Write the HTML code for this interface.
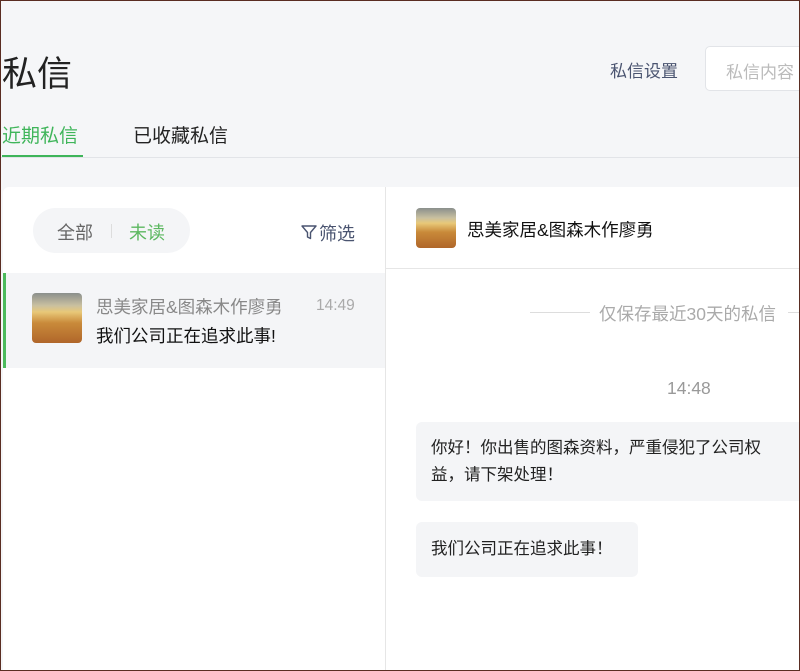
<!DOCTYPE html>
<html><head><meta charset="utf-8"><style>
*{margin:0;padding:0;box-sizing:border-box}
body{width:800px;height:671px;overflow:hidden;background:#f5f6f8;font-family:"Liberation Sans","Noto Sans CJK SC",sans-serif;position:relative;}
.a{position:absolute}
.av{background:linear-gradient(180deg,#8a8f8c 0%,#c9c0a0 25%,#e8c878 38%,#c98a3a 60%,#b0662a 100%);border-radius:4px}
</style></head><body>
<div class="a" style="left:2px;top:46px;font-size:35px;color:#222">私信</div>
<div class="a" style="left:610px;top:57px;font-size:17px;color:#4a5470">私信设置</div>
<div class="a" style="left:705px;top:46px;width:100px;height:45px;background:#fff;border:1px solid #e2e4e8;border-radius:5px;font-size:17px;color:#bbb;padding:11px 0 0 20px;white-space:nowrap;overflow:hidden">私信内容</div>
<div class="a" style="left:2px;top:121px;font-size:19px;color:#3fb55a">近期私信</div>
<div class="a" style="left:2px;top:155px;width:81px;height:2px;background:#3fb55a"></div>
<div class="a" style="left:133px;top:121px;font-size:19px;color:#222">已收藏私信</div>
<div class="a" style="left:0;top:157px;width:800px;height:1px;background:#e2e4e8"></div>
<div class="a" style="left:3px;top:187px;width:382px;height:484px;background:#fff;border-top-left-radius:6px"></div>
<div class="a" style="left:385px;top:187px;width:1px;height:484px;background:#e6e6e6"></div>
<div class="a" style="left:386px;top:187px;width:414px;height:484px;background:#fff"></div>
<div class="a" style="left:33px;top:208px;width:157px;height:45px;background:#f4f5f7;border-radius:23px"></div>
<div class="a" style="left:57px;top:219px;font-size:18px;color:#666">全部</div>
<div class="a" style="left:111px;top:224px;width:1px;height:14px;background:#ddd"></div>
<div class="a" style="left:129px;top:219px;font-size:18px;color:#5cb860">未读</div>
<svg class="a" style="left:300px;top:223px" width="18" height="18" viewBox="0 0 18 18"><path d="M2 3h14l-5.5 6.5v6l-3-1.5v-4.5z" fill="none" stroke="#4a5470" stroke-width="1.4" stroke-linejoin="round"/></svg>
<div class="a" style="left:319px;top:220px;font-size:18px;color:#4a5470">筛选</div>
<div class="a" style="left:3px;top:273px;width:382px;height:95px;background:#f4f5f7;border-left:3px solid #4cbb5c"></div>
<div class="a av" style="left:32px;top:293px;width:50px;height:50px"></div>
<div class="a" style="left:96px;top:294px;font-size:17.5px;color:#888">思美家居&amp;图森木作廖勇</div>
<div class="a" style="left:316px;top:297px;font-size:15.5px;color:#aaa">14:49</div>
<div class="a" style="left:96px;top:323px;font-size:17.5px;color:#111">我们公司正在追求此事!</div>
<div class="a av" style="left:416px;top:208px;width:40px;height:40px"></div>
<div class="a" style="left:467px;top:217px;font-size:17.5px;color:#111">思美家居&amp;图森木作廖勇</div>
<div class="a" style="left:386px;top:268px;width:414px;height:1px;background:#e6e6e6"></div>
<div class="a" style="left:530px;top:312px;width:60px;height:1px;background:#ddd"></div>
<div class="a" style="left:599px;top:301px;font-size:17.5px;color:#aaa">仅保存最近30天的私信</div>
<div class="a" style="left:788px;top:312px;width:12px;height:1px;background:#ddd"></div>
<div class="a" style="left:667px;top:378px;font-size:17.5px;color:#999">14:48</div>
<div class="a" style="left:416px;top:422px;width:400px;height:79px;background:#f4f5f7;border-radius:6px;padding:13px 0 0 15px;font-size:16.5px;line-height:27px;color:#222">你好！你出售的图森资料，严重侵犯了公司权<br>益，请下架处理！</div>
<div class="a" style="left:416px;top:522px;width:222px;height:55px;background:#f4f5f7;border-radius:6px;padding:14px 0 0 15px;font-size:16.5px;line-height:26px;color:#222">我们公司正在追求此事！</div>
<div class="a" style="left:0;top:0;width:800px;height:671px;border:1px solid #5a2d22;pointer-events:none"></div>
</body></html>
